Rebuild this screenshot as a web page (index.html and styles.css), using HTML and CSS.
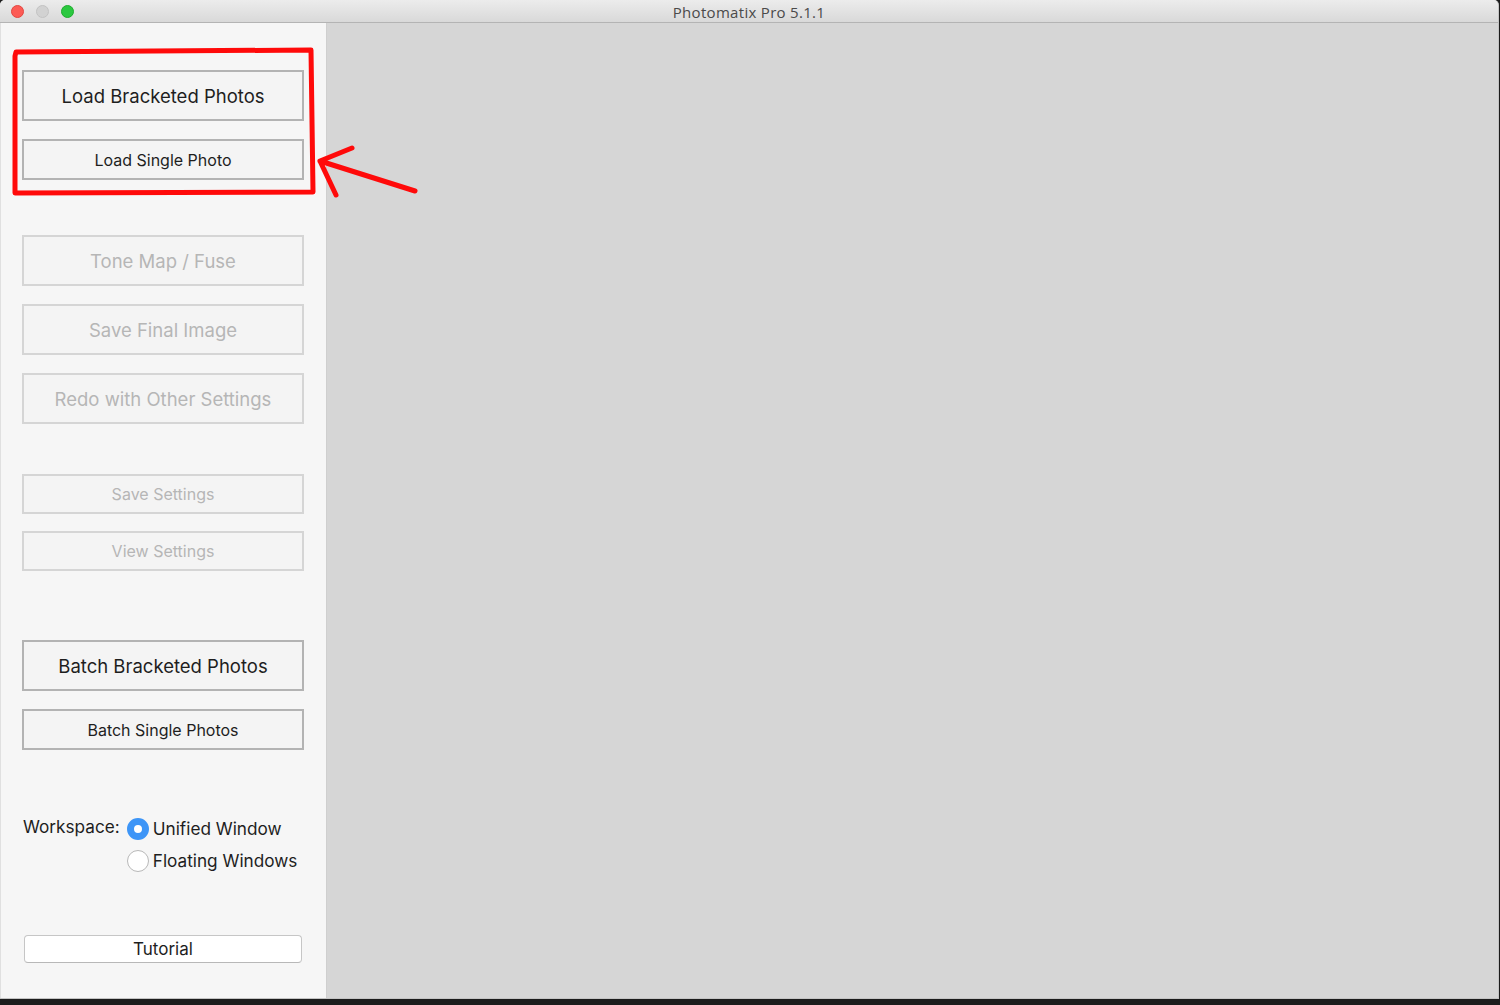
FILE: index.html
```html
<!DOCTYPE html>
<html lang="en">

<head>
    <meta charset="UTF-8">
    <meta name="viewport" content="width=device-width, initial-scale=1.0">
    <title>Photomatix Pro 5.1.1</title>
    <link rel="stylesheet" href="styles.css">
</head>

<body>
    <div class="window">
        <div class="titlebar">
            <div class="lights">
                <span class="light red"></span>
                <span class="light grey"></span>
                <span class="light green"></span>
            </div>
            <div class="title">Photomatix Pro 5.1.1</div>
        </div>

        <div class="content">
            <div class="sidebar">
                <div class="group group-load">
                    <button class="btn big">Load Bracketed Photos</button>
                    <button class="btn small">Load Single Photo</button>
                </div>

                <div class="group group-process">
                    <button class="btn big" disabled>Tone Map / Fuse</button>
                    <button class="btn big" disabled>Save Final Image</button>
                    <button class="btn big" disabled>Redo with Other Settings</button>
                </div>

                <div class="group group-settings">
                    <button class="btn compact" disabled>Save Settings</button>
                    <button class="btn compact" disabled>View Settings</button>
                </div>

                <div class="group group-batch">
                    <button class="btn big">Batch Bracketed Photos</button>
                    <button class="btn small">Batch Single Photos</button>
                </div>

                <div class="workspace">
                    <span class="ws-label">Workspace:</span>
                    <div class="ws-options">
                        <label class="radio"><span class="dot checked"></span>Unified Window</label>
                        <label class="radio"><span class="dot"></span>Floating Windows</label>
                    </div>
                </div>

                <button class="tutorial">Tutorial</button>
            </div>

            <div class="main"></div>
        </div>
    </div>

    <!-- red annotation drawn on top of the screenshot -->
    <svg class="annotation" width="430" height="210" viewBox="0 0 430 210">
        <path d="M15 56 L16 52 L311 50 L313 192 L15 193 Z" fill="none" stroke="#ff0a0a" stroke-width="5"
            stroke-linejoin="round" stroke-linecap="round" />
        <path d="M415 191 L320 161 M320 161 L352 148 M320 161 L336 195" fill="none" stroke="#ff0a0a"
            stroke-width="5" stroke-linecap="round" />
    </svg>
</body>

</html>
```

FILE: styles.css
```css
body {
    margin: 0;
    background: #1c1c1c;
    font-family: Inter, "Noto Sans", Roboto, sans-serif;
    color: #1e1e1e;
}

.window {
    width: 1498px;
    height: 998px;
    display: flex;
    flex-direction: column;
    background: #d6d6d6;
    border-radius: 5px 5px 0 0;
    overflow: hidden;
    border-right: 1px solid #c4c4c4;
    border-bottom: 1px solid #c4c4c4;
}

.titlebar {
    height: 22px;
    flex: none;
    display: flex;
    align-items: center;
    position: relative;
    background: linear-gradient(#ececec, #d9d9d9);
    border-bottom: 1px solid #b4b4b4;
}

.lights {
    display: flex;
    gap: 12px;
    padding-left: 11px;
    padding-top: 1px;
}

.light {
    width: 13px;
    height: 13px;
    border-radius: 50%;
    box-sizing: border-box;
}

.red {
    background: #fc5b55;
    border: 1px solid #e2463f;
}

.grey {
    background: #d2d2d2;
    border: 1px solid #c2c2c2;
}

.green {
    background: #2bc840;
    border: 1px solid #1eac2d;
}

.title {
    position: absolute;
    left: 0;
    right: 0;
    top: 2px;
    text-align: center;
    font-family: "Open Sans", Inter, sans-serif;
    font-size: 15px;
    letter-spacing: 0.3px;
    color: #4a4a4a;
}

.content {
    flex: 1;
    display: flex;
}

.sidebar {
    width: 326px;
    flex: none;
    background: #f6f6f6;
    border-left: 1px solid #e0e0e0;
    box-sizing: border-box;
    padding: 47px 0 0 21px;
    display: flex;
    flex-direction: column;
}

.main {
    flex: 1;
    background: #d6d6d6;
    border-left: 1px solid #cfcfcf;
}

.group {
    display: flex;
    flex-direction: column;
    gap: 18px;
}

.group-process {
    margin-top: 55px;
}

.group-settings {
    margin-top: 50px;
    gap: 17px;
}

.group-batch {
    margin-top: 69px;
}

.btn {
    width: 282px;
    box-sizing: border-box;
    background: #f4f4f4;
    border: 2px solid #b3b3b3;
    font-family: inherit;
    color: #1e1e1e;
    padding: 0;
    cursor: pointer;
}

.btn.big {
    height: 51px;
    font-size: 18.5px;
}

.btn.small {
    height: 41px;
    font-size: 16px;
}

.btn.compact {
    height: 40px;
    font-size: 16px;
}

.btn:disabled {
    color: #b6b6b6;
    border-color: #d5d5d5;
    cursor: default;
}

.workspace {
    margin-top: 65px;
    display: flex;
    gap: 7px;
    padding-left: 1px;
    font-size: 17.2px;
}

.ws-label {
    line-height: 24px;
}

.ws-options {
    display: flex;
    flex-direction: column;
    gap: 8px;
    padding-top: 2px;
}

.radio {
    display: flex;
    align-items: center;
    gap: 4px;
    line-height: 24px;
}

.dot {
    width: 22px;
    height: 22px;
    box-sizing: border-box;
    border-radius: 50%;
    border: 1px solid #b8b8b8;
    background: #fff;
}

.dot.checked {
    border: 7px solid #3d95f7;
    background: #fff;
}

.tutorial {
    margin-top: 62px;
    margin-left: 2px;
    width: 278px;
    height: 28px;
    background: #fff;
    border: 1px solid #c6c6c6;
    border-bottom-color: #b8b8b8;
    border-radius: 4px;
    font-family: inherit;
    font-size: 17px;
    color: #1e1e1e;
    padding: 0;
}

.annotation {
    position: absolute;
    left: 0;
    top: 0;
    pointer-events: none;
}
```
